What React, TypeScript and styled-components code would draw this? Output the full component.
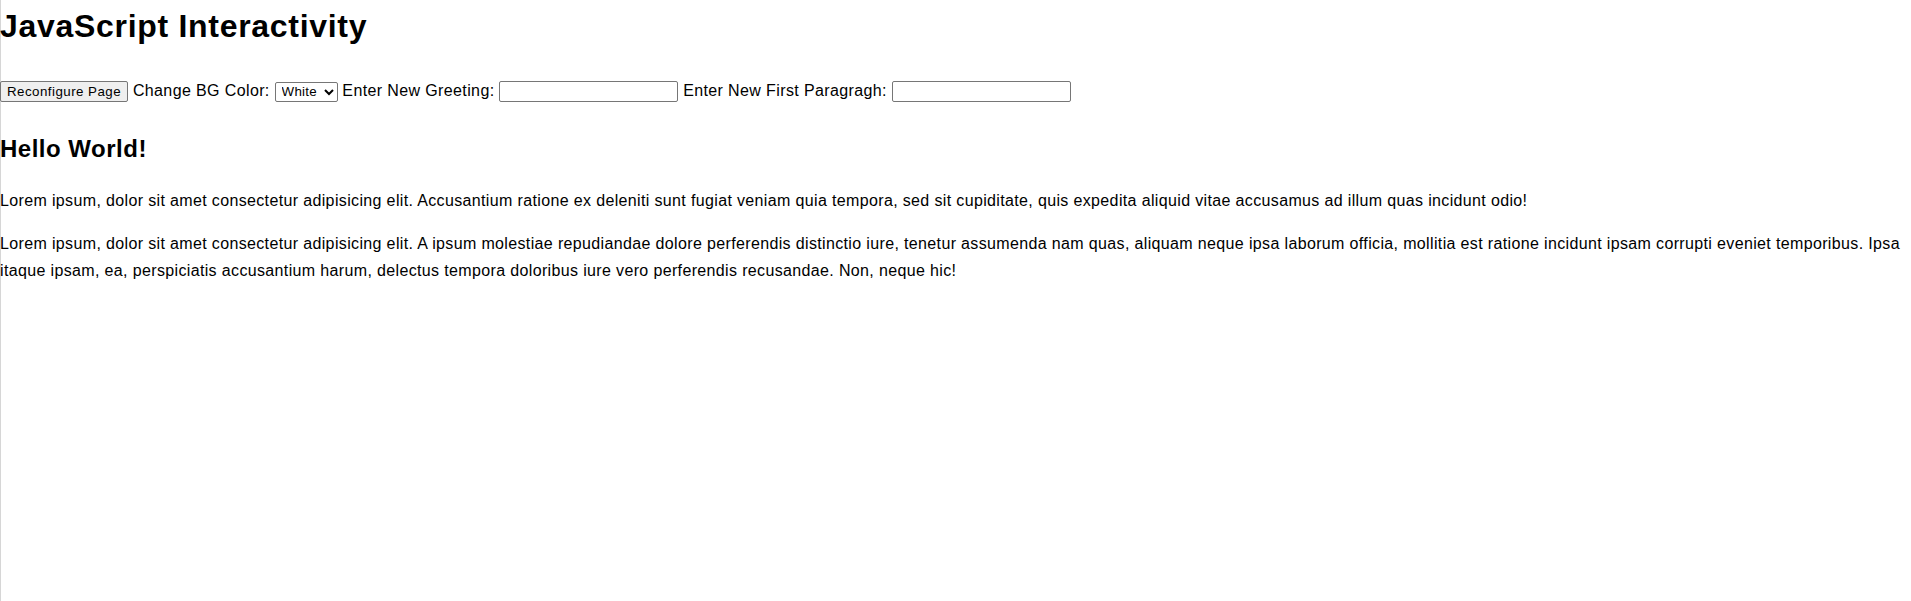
import React from "react";
import styled, { createGlobalStyle } from "styled-components";

const GlobalStyle = createGlobalStyle`
  html, body {
    margin: 0;
    padding: 0;
    background: #ffffff;
  }
  body {
    font-family: "Liberation Sans", Arial, sans-serif;
    color: #000000;
  }
`;

const Page = styled.div`
  min-height: 100vh;
  box-shadow: inset 1px 0 0 #d6d6d6;
  font-size: 16px;
  line-height: 1.66;
  letter-spacing: 0.355px;
`;

const Title = styled.h1`
  margin: 0 0 25px;
  font-size: 32px;
  font-weight: bold;
  letter-spacing: 0.7px;
`;

const Controls = styled.div`
  margin: 0;
`;

const Button = styled.button`
  display: inline-block;
  box-sizing: border-box;
  height: 21px;
  padding: 0 6px;
  margin: 0;
  font-family: "Liberation Sans", Arial, sans-serif;
  font-size: 13.333px;
  letter-spacing: 0.46px;
  line-height: 19px;
  color: #000;
  background: #efefef;
  border: 1px solid #767676;
  border-radius: 2px;
  vertical-align: baseline;
`;

const Label = styled.span`
  font-size: 16px;
  letter-spacing: 0.38px;
`;

const Select = styled.select`
  box-sizing: border-box;
  width: 63px;
  height: 20px;
  margin: 0;
  padding: 0 0 0 2px;
  font-family: "Liberation Sans", Arial, sans-serif;
  font-size: 13.333px;
  letter-spacing: 0.3px;
  color: #000;
  background: #fff;
  border: 1px solid #767676;
  border-radius: 2px;
`;

const TextInput = styled.input`
  box-sizing: border-box;
  width: 179px;
  height: 21px;
  margin: 0;
  padding: 1px 2px;
  font-family: "Liberation Sans", Arial, sans-serif;
  font-size: 13.333px;
  background: #fff;
  border: 1px solid #767676;
  border-radius: 2px;
`;

const Heading = styled.h2`
  margin: 24px 0 20px;
  font-size: 24px;
  font-weight: bold;
  letter-spacing: 0.5px;
`;

const Paragraph = styled.p`
  margin: 0 0 16px;
`;

export default function App() {
  return (
    <>
      <GlobalStyle />
      <Page>
        <Title>JavaScript Interactivity</Title>
        <Controls>
          <Button type="button">Reconfigure Page</Button>{" "}
          <Label>Change BG Color:</Label>{" "}
          <Select defaultValue="white">
            <option value="white">White</option>
            <option value="lightblue">Light Blue</option>
            <option value="lightgreen">Light Green</option>
          </Select>{" "}
          <Label>Enter New Greeting:</Label>{" "}
          <TextInput type="text" />{" "}
          <Label>Enter New First Paragragh:</Label>{" "}
          <TextInput type="text" />
        </Controls>
        <Heading>Hello World!</Heading>
        <Paragraph>
          Lorem ipsum, dolor sit amet consectetur adipisicing elit. Accusantium ratione ex deleniti sunt fugiat veniam quia tempora, sed sit cupiditate, quis expedita aliquid vitae accusamus ad illum quas incidunt odio!
        </Paragraph>
        <Paragraph>
          Lorem ipsum, dolor sit amet consectetur adipisicing elit. A ipsum molestiae repudiandae dolore perferendis distinctio iure, tenetur assumenda nam quas, aliquam neque ipsa laborum officia, mollitia est ratione incidunt ipsam corrupti eveniet temporibus. Ipsa itaque ipsam, ea, perspiciatis accusantium harum, delectus tempora doloribus iure vero perferendis recusandae. Non, neque hic!
        </Paragraph>
      </Page>
    </>
  );
}
